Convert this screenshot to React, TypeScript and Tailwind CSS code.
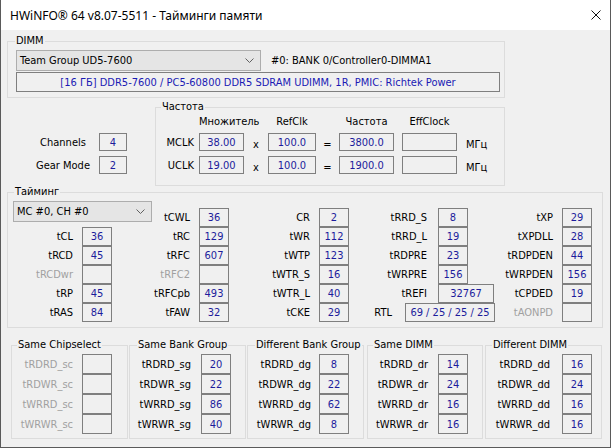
import React from 'react';

const valueColor = 'text-[#1c1c9c]';

function Box({ v, w = 'w-[30px]', h = 'h-[19px]' }: { v?: string; w?: string; h?: string }) {
  return (
    <div className={`${w} ${h} shrink-0 border border-[#7f7f7f] flex items-center justify-center ${valueColor}`}>
      {v}
    </div>
  );
}

function Group({
  title,
  className,
  legendPos,
  children,
}: {
  title: string;
  className: string;
  legendPos: string;
  children: React.ReactNode;
}) {
  return (
    <div className={`relative border border-[#dcdcdc] shrink-0 ${className}`}>
      <span className={`absolute top-[-8px] ${legendPos} px-[1px] bg-[#f0f0f0] leading-[14px] text-black whitespace-nowrap`}>
        {title}
      </span>
      {children}
    </div>
  );
}

function Combo({ text, w }: { text: string; w: string }) {
  return (
    <div className={`${w} h-[21px] shrink-0 border border-[#adadad] bg-[#e5e5e5] flex items-center justify-between pl-[3px] pr-[6px]`}>
      <span>{text}</span>
      <svg width="9" height="5" viewBox="0 0 9 5">
        <polyline points="0.5,0.5 4.5,4.5 8.5,0.5" fill="none" stroke="#606060" strokeWidth="1" />
      </svg>
    </div>
  );
}

type T = { l: string; v?: string; off?: boolean };

function TRow({ t, lw }: { t: T; lw: string }) {
  return (
    <div className="flex h-[19px] items-center">
      <span className={`${lw} shrink-0 text-right whitespace-nowrap ${t.off ? 'text-[#a0a0a0]' : 'text-black'}`}>{t.l}</span>
      <Box v={t.v} />
    </div>
  );
}

function SubGroup({
  title,
  className,
  legendPos,
  lw,
  rows,
}: {
  title: string;
  className: string;
  legendPos: string;
  lw: string;
  rows: T[];
}) {
  return (
    <Group title={title} className={`${className} h-[94px]`} legendPos={legendPos}>
      <div className="pt-[8px] flex flex-col">
        {rows.map((t) => (
          <div key={t.l} className="flex h-[20px] items-center">
            <span className={`${lw} shrink-0 text-right whitespace-nowrap ${t.off ? 'text-[#a0a0a0]' : 'text-black'}`}>{t.l}</span>
            <Box v={t.v} h="h-[20px]" />
          </div>
        ))}
      </div>
    </Group>
  );
}

const colA: T[] = [
  { l: 'tCL', v: '36' },
  { l: 'tRCD', v: '45' },
  { l: 'tRCDwr', off: true },
  { l: 'tRP', v: '45' },
  { l: 'tRAS', v: '84' },
];
const colB: T[] = [
  { l: 'tCWL', v: '36' },
  { l: 'tRC', v: '129' },
  { l: 'tRFC', v: '607' },
  { l: 'tRFC2', off: true },
  { l: 'tRFCpb', v: '493' },
  { l: 'tFAW', v: '32' },
];
const colC: T[] = [
  { l: 'CR', v: '2' },
  { l: 'tWR', v: '112' },
  { l: 'tWTP', v: '123' },
  { l: 'tWTR_S', v: '16' },
  { l: 'tWTR_L', v: '40' },
  { l: 'tCKE', v: '29' },
];
const colD: T[] = [
  { l: 'tRRD_S', v: '8' },
  { l: 'tRRD_L', v: '19' },
  { l: 'tRDPRE', v: '23' },
  { l: 'tWRPRE', v: '156' },
];
const colE: T[] = [
  { l: 'tXP', v: '29' },
  { l: 'tXPDLL', v: '28' },
  { l: 'tRDPDEN', v: '44' },
  { l: 'tWRPDEN', v: '156' },
  { l: 'tCPDED', v: '19' },
  { l: 'tAONPD', off: true },
];

export default function App() {
  return (
    <div className="w-[611px] h-[448px] bg-[#f0f0f0] border-x border-b border-[#5a5a5a] flex flex-col overflow-hidden text-[11px] leading-[13px] font-['DejaVu_Sans_Condensed','DejaVu_Sans',sans-serif] text-black">
      {/* title bar */}
      <div className="h-[30px] shrink-0 bg-white flex items-center justify-between pl-[9px] pr-[9px]">
        <span className="font-['Noto_Sans',sans-serif] text-[12px] text-black">
          HWiNFO® 64 v8.07-5511 - Тайминги памяти
        </span>
        <svg width="10" height="10" viewBox="0 0 10 10">
          <path d="M0.5 0.5 L9.5 9.5 M9.5 0.5 L0.5 9.5" stroke="#111" strokeWidth="1" />
        </svg>
      </div>

      {/* DIMM */}
      <Group title="DIMM" className="ml-[6px] mt-[11px] w-[498px] h-[57px]" legendPos="left-[7px]">
        <div className="pt-[8px] pl-[8px] flex flex-col">
          <div className="flex items-center">
            <Combo text="Team Group UD5-7600" w="w-[245px]" />
            <span className="ml-[10px]">#0: BANK 0/Controller0-DIMMA1</span>
          </div>
          <div className="mt-[1px] w-[484px] h-[20px] border border-[#7f7f7f] flex items-center justify-center text-[#1a1ab4] whitespace-nowrap">
            [16 ГБ] DDR5-7600 / PC5-60800 DDR5 SDRAM UDIMM, 1R, PMIC: Richtek Power
          </div>
        </div>
      </Group>

      {/* channels + frequency */}
      <div className="mt-[9px] flex">
        <div className="w-[154px] shrink-0 pt-[26px] flex flex-col gap-[5px]">
          <div className="flex h-[18px] items-center">
            <span className="ml-[26px] w-[72px] text-center">Channels</span>
            <Box v="4" w="w-[28px]" h="h-[18px]" />
          </div>
          <div className="flex h-[18px] items-center">
            <span className="ml-[26px] w-[72px] text-center">Gear Mode</span>
            <Box v="2" w="w-[28px]" h="h-[18px]" />
          </div>
        </div>
        <Group title="Частота" className="w-[350px] h-[79px]" legendPos="left-[5px]">
          <div className="pt-[6px] flex flex-col">
            <div className="flex h-[14px] items-center">
              <span className="w-[43px]" />
              <span className="w-[45px] text-center whitespace-nowrap">Множитель</span>
              <span className="w-[24px]" />
              <span className="w-[48px] text-center">RefClk</span>
              <span className="w-[23px]" />
              <span className="w-[55px] text-center">Частота</span>
              <span className="w-[8px]" />
              <span className="w-[55px] text-center">EffClock</span>
            </div>
            {[
              ['MCLK', '38.00', '100.0', '3800.0'],
              ['UCLK', '19.00', '100.0', '1900.0'],
            ].map((r) => (
              <div key={r[0]} className="mt-[5px] flex h-[18px] items-center">
                <span className="w-[43px] text-right pr-[5px]">{r[0]}</span>
                <Box v={r[1]} w="w-[45px]" h="h-[18px]" />
                <span className="w-[24px] text-center pt-[5px]">x</span>
                <Box v={r[2]} w="w-[48px]" h="h-[18px]" />
                <span className="w-[23px] text-center pt-[4px]">=</span>
                <Box v={r[3]} w="w-[55px]" h="h-[18px]" />
                <span className="w-[8px]" />
                <Box w="w-[55px]" h="h-[18px]" />
                <span className="ml-[9px] pt-[4px]">МГц</span>
              </div>
            ))}
          </div>
        </Group>
      </div>

      {/* timings */}
      <Group title="Тайминг" className="ml-[6px] mt-[6px] w-[596px] h-[136px]" legendPos="left-[6px]">
        <div className="flex pl-[5px]">
          <div className="w-[139px] shrink-0 pt-[8px] flex flex-col">
            <Combo text="MC #0, CH #0" w="w-[139px]" />
            <div className="mt-[5px] flex flex-col">
              {colA.map((t) => (
                <TRow key={t.l} t={t} lw="w-[69px] pr-[9px]" />
              ))}
            </div>
          </div>
          <div className="w-[77px] shrink-0 pt-[15px] flex flex-col">
            {colB.map((t) => (
              <TRow key={t.l} t={t} lw="w-[47px] pr-[9px]" />
            ))}
          </div>
          <div className="w-[120px] shrink-0 pt-[15px] flex flex-col">
            {colC.map((t) => (
              <TRow key={t.l} t={t} lw="w-[90px] pr-[9px]" />
            ))}
          </div>
          <div className="w-[145px] shrink-0 pt-[15px] flex flex-col">
            {colD.map((t) => (
              <TRow key={t.l} t={t} lw="w-[89px] pr-[11px]" />
            ))}
            <div className="flex h-[19px] items-center">
              <span className="w-[89px] shrink-0 text-right pr-[11px]">tREFI</span>
              <Box v="32767" w="w-[56px]" />
            </div>
            <div className="flex h-[19px] items-center">
              <span className="w-[56px] shrink-0 text-right pr-[13px]">RTL</span>
              <Box v="69 / 25 / 25 / 25" w="w-[90px]" />
            </div>
          </div>
          <div className="w-[98px] shrink-0 pt-[15px] flex flex-col">
            {colE.map((t) => (
              <TRow key={t.l} t={t} lw="w-[68px] pr-[9px]" />
            ))}
          </div>
        </div>
      </Group>

      {/* bottom groups */}
      <div className="mt-[17px] ml-[10px] flex">
        <SubGroup
          title="Same Chipselect"
          className="w-[117px]"
          legendPos="left-[5px]"
          lw="w-[70px] pr-[9px]"
          rows={[
            { l: 'tRDRD_sc', off: true },
            { l: 'tRDWR_sc', off: true },
            { l: 'tWRRD_sc', off: true },
            { l: 'tWRWR_sc', off: true },
          ]}
        />
        <SubGroup
          title="Same Bank Group"
          className="ml-[1px] w-[117px]"
          legendPos="left-[7px]"
          lw="w-[71px] pr-[10px]"
          rows={[
            { l: 'tRDRD_sg', v: '20' },
            { l: 'tRDWR_sg', v: '22' },
            { l: 'tWRRD_sg', v: '86' },
            { l: 'tWRWR_sg', v: '40' },
          ]}
        />
        <SubGroup
          title="Different Bank Group"
          className="ml-[1px] w-[117px]"
          legendPos="left-[7px]"
          lw="w-[71px] pr-[8px]"
          rows={[
            { l: 'tRDRD_dg', v: '8' },
            { l: 'tRDWR_dg', v: '22' },
            { l: 'tWRRD_dg', v: '62' },
            { l: 'tWRWR_dg', v: '8' },
          ]}
        />
        <SubGroup
          title="Same DIMM"
          className="ml-[3px] w-[116px]"
          legendPos="left-[5px]"
          lw="w-[70px] pr-[10px]"
          rows={[
            { l: 'tRDRD_dr', v: '14' },
            { l: 'tRDWR_dr', v: '24' },
            { l: 'tWRRD_dr', v: '16' },
            { l: 'tWRWR_dr', v: '16' },
          ]}
        />
        <SubGroup
          title="Different DIMM"
          className="ml-[2px] w-[117px]"
          legendPos="left-[6px]"
          lw="w-[76px] pr-[12px]"
          rows={[
            { l: 'tRDRD_dd', v: '16' },
            { l: 'tRDWR_dd', v: '24' },
            { l: 'tWRRD_dd', v: '16' },
            { l: 'tWRWR_dd', v: '16' },
          ]}
        />
      </div>
    </div>
  );
}
